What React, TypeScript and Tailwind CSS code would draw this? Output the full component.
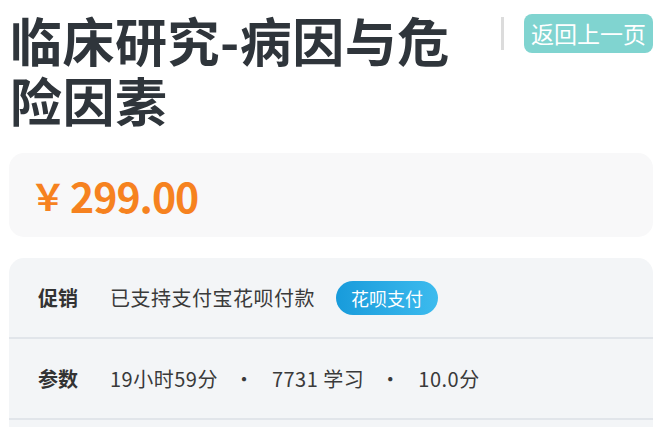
import React from 'react';

const font = { fontFamily: '"Noto Sans CJK SC", "Noto Sans", sans-serif' };

const App = () => {
  const stats = ['19小时59分', '7731 学习', '10.0分'];

  return (
    <div className="min-h-screen bg-white pl-[9px] pr-[13px]" style={font}>
      {/* Header */}
      <div className="flex items-start pt-[10px]">
        <h1 className="w-[480px] text-[52px] leading-[60px] font-bold text-[#2f353b] pl-[1px] tracking-[0.5px]">
          临床研究-病因与危险因素
        </h1>
        <div className="flex items-center mt-[4px] ml-auto">
          <div className="w-[3px] h-[33px] bg-[#dcdcdc] mr-[20px]"></div>
          <button className="h-[39px] px-[7px] rounded-[8px] bg-[#80d4d0] text-white text-[23px] leading-[39px]">
            返回上一页
          </button>
        </div>
      </div>

      {/* Price */}
      <div className="mt-[23px] h-[84px] rounded-[15px] bg-[#f8f8f9] px-[29px] flex items-center">
        <span className="text-[#f6821f] font-bold text-[36px] leading-none ml-[-8px] mr-[4px]">￥</span>
        <span className="text-[#f6821f] font-bold text-[41px] leading-none tracking-[-1px]">299.00</span>
      </div>

      {/* Info */}
      <div className="mt-[21px] rounded-t-[15px] bg-[#f3f5f7]">
        <div className="h-[81px] px-[29px] flex items-center border-b-[2px] border-[#e1e5ea]">
          <span className="w-[72px] text-[20px] font-bold text-[#333]">促销</span>
          <span className="text-[20px] text-[#3a3a3a] tracking-[0.5px]">已支持支付宝花呗付款</span>
          <span className="ml-[21px] h-[34px] px-[15px] rounded-full bg-gradient-to-r from-[#179bdb] to-[#3cbbee] text-white text-[18px] leading-[34px]">
            花呗支付
          </span>
        </div>
        <div className="h-[81px] px-[29px] flex items-center border-b-[2px] border-[#e1e5ea]">
          <span className="w-[72px] text-[20px] font-bold text-[#333]">参数</span>
          <div className="flex items-center text-[20px] text-[#3a3a3a]">
            {stats.map((s, i) => (
              <React.Fragment key={i}>
                {i > 0 && <span className="ml-[16px] mr-[18px]">·</span>}
                <span className="tracking-[0.5px]">{s}</span>
              </React.Fragment>
            ))}
          </div>
        </div>
        <div className="h-[40px]"></div>
      </div>
    </div>
  );
};

export default App;
